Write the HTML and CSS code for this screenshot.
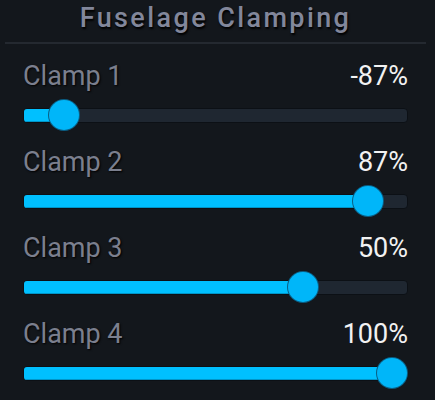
FILE: index.html
```html
<!DOCTYPE html>
<html>
<head>
<meta charset="utf-8">
<link rel="stylesheet" href="styles.css">
</head>
<body>
<div class="panel">
  <div class="header">Fuselage Clamping</div>
  <div class="rows">
    <div class="row">
      <div class="labels"><span class="name">Clamp 1</span><span class="value">-87%</span></div>
      <div class="slider">
        <div class="track"><div class="fill" style="width:40.5px"></div></div>
        <div class="thumb" style="left:63.5px"></div>
      </div>
    </div>
    <div class="row">
      <div class="labels"><span class="name">Clamp 2</span><span class="value">87%</span></div>
      <div class="slider">
        <div class="track"><div class="fill" style="width:345px"></div></div>
        <div class="thumb" style="left:368px"></div>
      </div>
    </div>
    <div class="row">
      <div class="labels"><span class="name">Clamp 3</span><span class="value">50%</span></div>
      <div class="slider">
        <div class="track"><div class="fill" style="width:280px"></div></div>
        <div class="thumb" style="left:303px"></div>
      </div>
    </div>
    <div class="row">
      <div class="labels"><span class="name">Clamp 4</span><span class="value">100%</span></div>
      <div class="slider">
        <div class="track"><div class="fill" style="width:369px"></div></div>
        <div class="thumb" style="left:392px"></div>
      </div>
    </div>
  </div>
</div>
</body>
</html>
```
FILE: styles.css
```css
html, body {
  margin: 0;
  padding: 0;
  background: #13171c;
  height: 100%;
  overflow: hidden;
}
.panel {
  width: 431px;
  font-family: Roboto, "Liberation Sans", sans-serif;
}
.header {
  margin: 0 5px;
  height: 42px;
  border-bottom: 2px solid #242930;
  box-sizing: content-box;
  text-align: center;
  font-size: 27px;
  font-weight: 500;
  letter-spacing: 2.4px;
  line-height: 36px;
  color: #82879b;
  text-shadow: 1px 2px 2px #000;
}
.rows {
  padding: 18px 23px 0 23px;
  display: flex;
  flex-direction: column;
  gap: 18px;
}
.row {
  display: flex;
  flex-direction: column;
  gap: 10px;
}
.labels {
  display: flex;
  justify-content: space-between;
  align-items: baseline;
  height: 28px;
  line-height: 28px;
}
.name {
  font-size: 27px;
  color: #7b7f8e;
  text-shadow: 1px 1px 2px #000;
}
.value {
  font-size: 27px;
  color: #f2f2f2;
}
.slider {
  position: relative;
  height: 30px;
  display: flex;
  align-items: center;
}
.track {
  flex: 1;
  height: 15px;
  box-sizing: border-box;
  background: #1f2731;
  border: 1px solid #0c1015;
  border-radius: 4px;
  overflow: hidden;
}
.fill {
  height: 100%;
  background: #00c0ff;
  border-bottom: 1px solid #0095c8;
  box-sizing: border-box;
}
.thumb {
  position: absolute;
  top: 0;
  width: 30px;
  height: 30px;
  margin-left: -38px;
  border-radius: 50%;
  background: #00b6f9;
  box-shadow: 0 0 0 1px #0a5f85;
}
```
